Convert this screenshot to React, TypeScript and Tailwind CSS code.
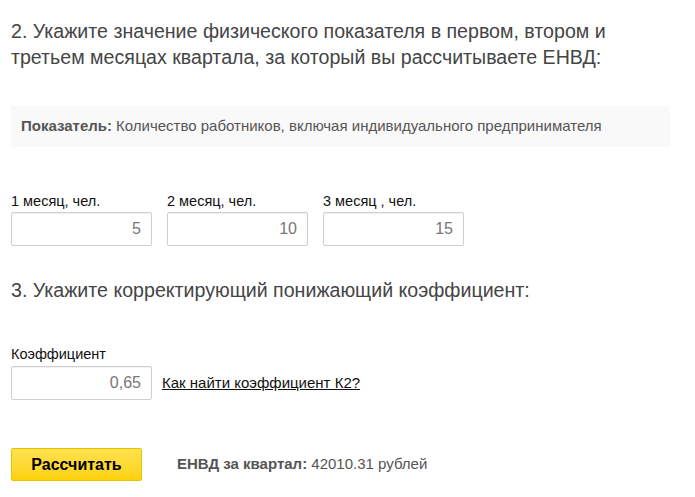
import React from 'react';

const months = [
  { label: '1 месяц, чел.', value: '5' },
  { label: '2 месяц, чел.', value: '10' },
  { label: '3 месяц , чел.', value: '15' },
];

const NumberField: React.FC<{ value: string }> = ({ value }) => (
  <input
    readOnly
    value={value}
    className="w-[141px] h-[34px] border border-[#cfcfcf] rounded-[2px] bg-white text-right pr-[10px] text-[16px] text-[#777] outline-none shadow-[inset_0_1px_1px_rgba(0,0,0,0.06)]"
  />
);

export default function App() {
  return (
    <div className="w-[695px] h-[497px] bg-white pl-[11px] pr-[25px] pt-[18px] font-['Liberation_Sans',Arial,sans-serif]">
      {/* Step 2 */}
      <h2 className="text-[19.6px] leading-[26px] text-[#454545]">
        2. Укажите значение физического показателя в первом, втором и третьем месяцах квартала, за который вы рассчитываете ЕНВД:
      </h2>

      <div className="mt-[36px] h-[41px] bg-[#f9f9f9] flex items-center pl-[10px] text-[15px] text-[#555]">
        <span className="font-bold mr-[4px]">Показатель:</span>
        Количество работников, включая индивидуального предпринимателя
      </div>

      <div className="mt-[46px] flex gap-[15px]">
        {months.map((m) => (
          <div key={m.label} className="flex flex-col">
            <label className="text-[14.5px] leading-[17px] text-[#111] mb-[2px]">{m.label}</label>
            <NumberField value={m.value} />
          </div>
        ))}
      </div>

      {/* Step 3 */}
      <h2 className="mt-[31px] text-[19.6px] leading-[26px] text-[#454545]">
        3. Укажите корректирующий понижающий коэффициент:
      </h2>

      <div className="mt-[43px] flex flex-col">
        <label className="text-[14.5px] leading-[17px] text-[#111] mb-[3px]">Коэффициент</label>
        <div className="flex items-center gap-[10px]">
          <NumberField value="0,65" />
          <a href="#" className="text-[15px] text-[#111] underline">
            Как найти коэффициент К2?
          </a>
        </div>
      </div>

      <div className="mt-[48px] flex items-center">
        <button className="w-[131px] h-[33px] rounded-[2px] border border-[#e6c200] bg-gradient-to-b from-[#ffe14d] to-[#fcd200] text-[16px] font-bold text-black">
          Рассчитать
        </button>
        <div className="ml-[35px] text-[15px] text-[#555]">
          <span className="font-bold">ЕНВД за квартал:</span> 42010.31 рублей
        </div>
      </div>
    </div>
  );
}
